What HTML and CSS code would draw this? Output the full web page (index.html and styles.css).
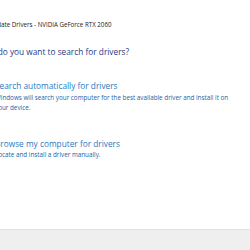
FILE: index.html
```html
<!DOCTYPE html>
<html lang="en">
<head>
  <meta charset="UTF-8" />
  <title>Update Drivers</title>
  <link rel="stylesheet" href="styles.css">
</head>
<body>

<div class="dialog">
  <div class="content">
    <div class="title">Update Drivers - NVIDIA GeForce RTX 2060</div>

    <h2 class="instruction">How do you want to search for drivers?</h2>

    <div class="option">
      <div class="option-title">Search automatically for drivers</div>
      <div class="option-desc">Windows will search your computer for the best available driver and install it on your device.</div>
    </div>

    <div class="option">
      <div class="option-title">Browse my computer for drivers</div>
      <div class="option-desc">Locate and install a driver manually.</div>
    </div>
  </div>

  <div class="footer"></div>
</div>

</body>
</html>
```

FILE: styles.css
```css
body {
  margin: 0;
  padding: 0;
  background: #fff;
  font-family: 'Open Sans', 'Noto Sans', sans-serif;
  overflow: hidden;
}

.dialog {
  width: 250px;
  height: 250px;
  display: flex;
  flex-direction: column;
  overflow: hidden;
}

.content {
  flex: 1;
  margin-left: -25px;
}

.title {
  font-size: 6.2px;
  line-height: 10px;
  color: #222;
  padding-top: 20px;
  padding-left: 14px;
  white-space: nowrap;
}

.instruction {
  margin: 16px 0 0 3px;
  font-size: 8.3px;
  line-height: 12px;
  font-weight: 400;
  color: #1e3a8a;
  white-space: nowrap;
}

.option {
  margin-top: 22px;
  padding-left: 20px;
  width: 240px;
}

.option + .option {
  margin-top: 25px;
}

.option-title {
  font-size: 8.3px;
  line-height: 12px;
  color: #2a79c2;
  white-space: nowrap;
}

.option-desc {
  margin-top: 1px;
  font-size: 6.3px;
  line-height: 10px;
  color: #1c5fa5;
}

.option + .option .option-desc {
  margin-top: 0;
}

.footer {
  height: 20px;
  background: #efefef;
  border-top: 1px solid #e2e2e2;
}
```
